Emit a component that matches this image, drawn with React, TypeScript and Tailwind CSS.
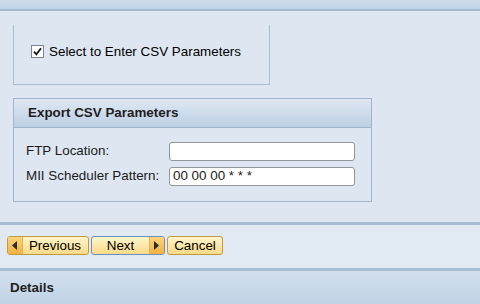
import React from "react";

function ArrowLeft() {
  return (
    <svg width="6" height="9" viewBox="0 0 6 9"><path d="M5 0 L0 4.5 L5 9 Z" fill="#2b2b2b" /></svg>
  );
}
function ArrowRight() {
  return (
    <svg width="6" height="9" viewBox="0 0 6 9"><path d="M0 0 L5 4.5 L0 9 Z" fill="#2b2b2b" /></svg>
  );
}

export default function App() {
  return (
    <div
      className="w-[480px] h-[304px] overflow-hidden bg-[#dee7f1] flex flex-col text-[13.4px] text-black"
      style={{ fontFamily: '"Liberation Sans", Arial, sans-serif' }}
    >
      {/* top strip */}
      <div className="h-[11px] shrink-0 bg-gradient-to-b from-[#cddcec] to-[#c2d4e8] border-b-[2px] border-[#a4bad1]" />

      <div className="flex flex-col pl-[13px]">
        {/* checkbox box */}
        <div className="mt-[14px] w-[257px] h-[60px] border-l border-r border-b border-[#a9bdd2] pl-[17px] pt-[20px]">
          <label className="flex items-center gap-[5px]">
            <span className="w-[13px] h-[13px] border border-[#7b8491] bg-white flex items-center justify-center">
              <svg width="9" height="9" viewBox="0 0 9 9">
                <path d="M1 4.6 L3.4 7.4 L8 1.2" stroke="#1a1a1a" strokeWidth="1.8" fill="none" />
              </svg>
            </span>
            <span className="leading-none">Select to Enter CSV Parameters</span>
          </label>
        </div>

        {/* export box */}
        <div className="mt-[13px] w-[359px] h-[104px] border border-[#9fb5cc] flex flex-col">
          <div className="h-[29px] shrink-0 bg-gradient-to-b from-[#dfe8f2] to-[#bccfe4] border-b border-[#9fb5cc] flex items-center pl-[14px] font-bold text-[#1e1e1e]">
            Export CSV Parameters
          </div>
          <div className="flex flex-col pl-[12px] pt-[13px] gap-[5px]">
            <div className="flex items-center">
              <span className="w-[143px] text-[#1a1a1a]">FTP Location:</span>
              <div className="w-[186px] h-[19px] rounded-[3px] border border-[#8f959c] bg-white" />
            </div>
            <div className="flex items-center">
              <span className="w-[143px] text-[#1a1a1a]">MII Scheduler Pattern:</span>
              <div className="w-[186px] h-[19px] rounded-[3px] border border-[#8f959c] bg-white flex items-center pl-[3px] text-[#1a1a1a]">
                00 00 00 * * *
              </div>
            </div>
          </div>
        </div>
      </div>

      {/* separator + button row */}
      <div className="mt-[20px] h-[3px] shrink-0 bg-[#a7bdd3]" />
      <div className="h-[43px] shrink-0 bg-[#e1e9f2] flex items-start pl-[7px] gap-[2px] pt-[11px]">
        <button className="w-[82px] h-[19px] flex rounded-[3px] border border-[#c19a43] overflow-hidden bg-gradient-to-b from-[#fff5cc] to-[#f9da86]">
          <span className="w-[15px] h-full flex items-center justify-center bg-gradient-to-b from-[#fbd57a] to-[#f2b13c] border-r border-[#e0b25a]">
            <ArrowLeft />
          </span>
          <span className="flex-1 flex items-center justify-center leading-none pr-[1px]">Previous</span>
        </button>
        <button className="w-[74px] h-[19px] flex rounded-[3px] border border-[#6e8fc1] overflow-hidden bg-gradient-to-b from-[#fff5cc] to-[#f9da86]">
          <span className="flex-1 flex items-center justify-center leading-none">Next</span>
          <span className="w-[15px] h-full flex items-center justify-center bg-gradient-to-b from-[#fbd57a] to-[#f2b13c] border-l border-[#e0b25a]">
            <ArrowRight />
          </span>
        </button>
        <button className="w-[56px] h-[19px] flex items-center justify-center rounded-[3px] border border-[#c19a43] bg-gradient-to-b from-[#fff5cc] to-[#f9da86] leading-none">
          Cancel
        </button>
      </div>
      <div className="h-[3px] shrink-0 bg-[#a7bdd3]" />
      <div className="flex-1 bg-gradient-to-b from-[#d3e0ee] to-[#c0d3e7] flex items-center pl-[10px] font-bold text-[#1e1e1e] pt-[2px]">
        Details
      </div>
    </div>
  );
}
